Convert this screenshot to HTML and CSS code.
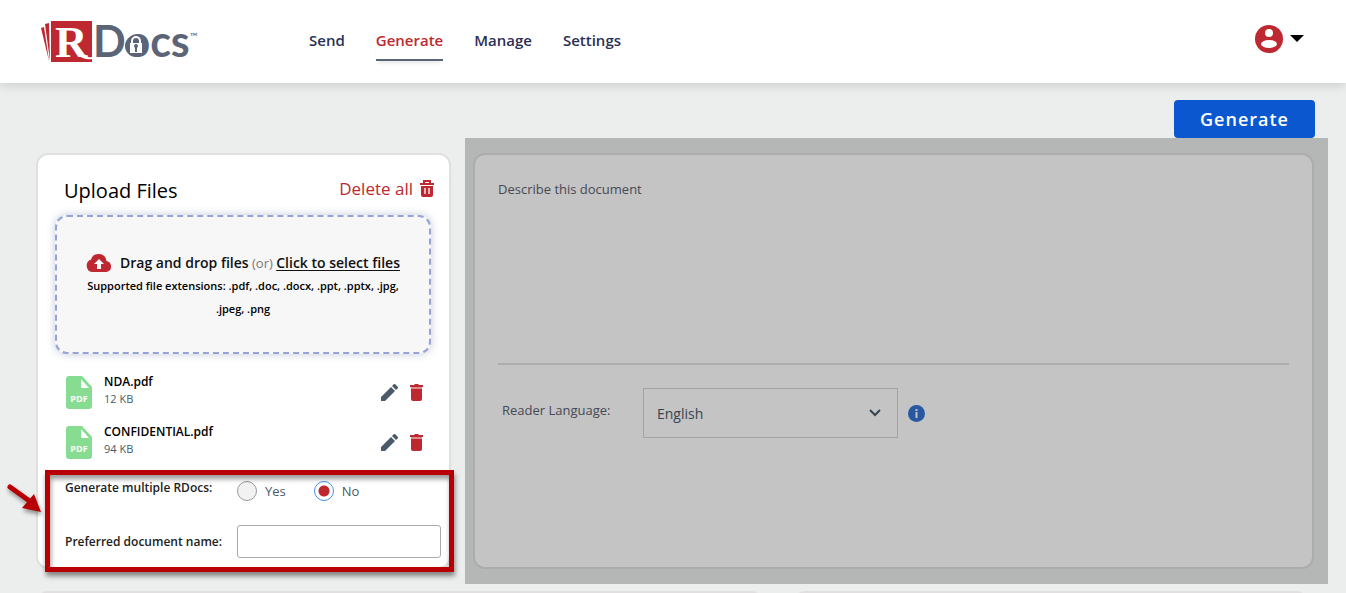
FILE: index.html
```html
<!DOCTYPE html>
<html lang="en">
<head>
    <meta charset="UTF-8">
    <meta name="viewport" content="width=device-width, initial-scale=1.0">
    <title>Generate - RDocs</title>
    <link rel="stylesheet" href="styles.css">
</head>
<body>
    <header>
        <a class="logo" href="#" aria-label="RDocs">
            <svg width="170" height="66" viewBox="0 -12 170 66">
                <path d="M1 7l3-1 5 34z" fill="#be2830"/>
                <path d="M5 3l4-1 1 38z" fill="#be2830"/>
                <path d="M11 0h41v41H11z" fill="#be2830"/>
                <text class="logo-r" x="15" y="36">R</text>
                <path d="M40 34q4 4 12 3" stroke="#fff" stroke-width="2" fill="none"/>
                <text class="logo-docs" x="53" y="36">Docs</text>
                <circle cx="96" cy="25" r="11" fill="#5c6577"/>
                <path d="M92 22v-2a4 4 0 0 1 8 0v2" stroke="#fff" stroke-width="2" fill="none"/>
                <path d="M90 22h12v10H90z" fill="#fff"/>
                <path d="M96 26v5" stroke="#5c6577" stroke-width="2"/>
                <circle cx="96" cy="25" r="2" fill="#5c6577"/>
                <text class="logo-tm" x="150" y="19">™</text>
            </svg>
        </a>
        <nav>
            <a href="#">Send</a>
            <a href="#" class="active">Generate</a>
            <a href="#">Manage</a>
            <a href="#">Settings</a>
        </nav>
        <button class="account" type="button" aria-label="Account">
            <svg width="28" height="28" viewBox="0 0 28 28">
                <circle cx="14" cy="14" r="14" fill="#be2830"/>
                <circle cx="14" cy="8" r="4" fill="#fff"/>
                <ellipse cx="14" cy="19" rx="8" ry="4" fill="#fff"/>
            </svg>
            <svg width="14" height="7" viewBox="0 0 14 7"><path d="M0 0h14L7 7z"/></svg>
        </button>
    </header>

    <main>
        <div class="toolbar">
            <button class="generate" type="button">Generate</button>
        </div>

        <div class="columns">
            <section class="card upload">
                <div class="card-head">
                    <h2>Upload Files</h2>
                    <button class="delete-all" type="button">Delete all
                        <svg width="16" height="18" viewBox="0 0 16 18">
                            <path d="M5 3V1h6v2M1 4h14" stroke="#be2830" stroke-width="2" fill="none"/>
                            <path d="M2 6v9q0 2 2 2h8q2 0 2-2V6z" fill="#be2830"/>
                            <path d="M6 8v6M10 8v6" stroke="#fff" stroke-width="1.3"/>
                        </svg>
                    </button>
                </div>

                <div class="drop-zone">
                    <p class="drop-line">
                        <svg width="26" height="18" viewBox="0 0 26 18">
                            <path d="M6 18a6.500 6.500 0 0 1-1-12.500A8 8 0 0 1 20.500 7 5.600 5.600 0 0 1 20.500 18z" fill="#be2830"/>
                            <path d="M13 5l5 5h-3v5h-4v-5H8z" fill="#fff"/>
                        </svg>
                        <span><b>Drag and drop files</b> (or) <a href="#">Click to select files</a></span>
                    </p>
                    <p class="extensions">Supported file extensions: .pdf, .doc, .docx, .ppt, .pptx, .jpg, .jpeg, .png</p>
                </div>

                <ul class="files">
                    <li>
                        <svg class="pdf" width="26" height="33" viewBox="0 0 26 33">
                            <path d="M3 0h13l10 11v19q0 3-3 3H3q-3 0-3-3V3q0-3 3-3z" fill="#86dc91"/>
                            <path d="M15 3v9h8z" fill="#fff"/>
                            <text x="13" y="26" text-anchor="middle">PDF</text>
                        </svg>
                        <div class="file-name">
                            <b>NDA.pdf</b>
                            <small>12 KB</small>
                        </div>
                        <button type="button" aria-label="Rename NDA.pdf">
                            <svg width="17" height="17" viewBox="0 0 17 17"><path d="M0 17v-4L10 3l4 4L4 17zM11 2l2-2h1l3 3v1l-2 2z" fill="#4a5a68"/></svg>
                        </button>
                        <button type="button" aria-label="Delete NDA.pdf">
                            <svg width="13" height="17" viewBox="0 0 13 17"><path d="M0 1h4l1-1h3l1 1h4v2H0z" fill="#be2830"/><path d="M1 3h11v2H1z" fill="#dc8a8e"/><path d="M1 5h11v10q0 2-2 2H3q-2 0-2-2z" fill="#be2830"/></svg>
                        </button>
                    </li>
                    <li>
                        <svg class="pdf" width="26" height="33" viewBox="0 0 26 33">
                            <path d="M3 0h13l10 11v19q0 3-3 3H3q-3 0-3-3V3q0-3 3-3z" fill="#86dc91"/>
                            <path d="M15 3v9h8z" fill="#fff"/>
                            <text x="13" y="26" text-anchor="middle">PDF</text>
                        </svg>
                        <div class="file-name">
                            <b>CONFIDENTIAL.pdf</b>
                            <small>94 KB</small>
                        </div>
                        <button type="button" aria-label="Rename CONFIDENTIAL.pdf">
                            <svg width="17" height="17" viewBox="0 0 17 17"><path d="M0 17v-4L10 3l4 4L4 17zM11 2l2-2h1l3 3v1l-2 2z" fill="#4a5a68"/></svg>
                        </button>
                        <button type="button" aria-label="Delete CONFIDENTIAL.pdf">
                            <svg width="13" height="17" viewBox="0 0 13 17"><path d="M0 1h4l1-1h3l1 1h4v2H0z" fill="#be2830"/><path d="M1 3h11v2H1z" fill="#dc8a8e"/><path d="M1 5h11v10q0 2-2 2H3q-2 0-2-2z" fill="#be2830"/></svg>
                        </button>
                    </li>
                </ul>

                <form class="options">
                    <div class="option-row" role="radiogroup" aria-labelledby="multipleLabel">
                        <span class="option-label raised" id="multipleLabel">Generate multiple RDocs:</span>
                        <label class="radio"><input type="radio" name="multiple" value="yes"> Yes</label>
                        <label class="radio"><input type="radio" name="multiple" value="no" checked> No</label>
                    </div>
                    <div class="option-row">
                        <label class="option-label" for="docName">Preferred document name:</label>
                        <input type="text" id="docName" name="docName">
                    </div>
                    <div class="highlight"></div>
                    <svg class="arrow" width="40" height="36" viewBox="0 0 40 36">
                        <path d="M5 5l21 15" stroke="#b80004" stroke-width="5" stroke-linecap="round"/>
                        <path d="M29 12l7 18-19-4z" fill="#b80004"/>
                    </svg>
                </form>
            </section>

            <section class="card details">
                <textarea aria-label="Describe this document" placeholder="Describe this document"></textarea>
                <div class="language">
                    <label class="raised" for="language">Reader Language:</label>
                    <div class="select">
                        <select id="language" name="language">
                            <option>English</option>
                        </select>
                        <svg width="12" height="8" viewBox="0 0 12 8"><path d="M1 1l5 5 5-5" stroke="#4a5a68" stroke-width="2" fill="none"/></svg>
                    </div>
                    <svg class="info" width="17" height="17" viewBox="0 0 17 17">
                        <circle cx="8.500" cy="8.500" r="8.500" fill="#3473d2"/>
                        <path d="M8.500 4v2M8.500 7v6" stroke="#fff" stroke-width="2" fill="none"/>
                    </svg>
                </div>
                <div class="shade"></div>
            </section>
        </div>

        <div class="lower">
            <section class="card"></section>
            <section class="card"></section>
        </div>
    </main>
</body>
</html>
```

FILE: styles.css
```css
* {
    box-sizing: border-box;
}
body {
    font-family: "Open Sans", "Noto Sans", sans-serif;
    background-color: #ebeeed;
    color: #4a5a68;
    margin: 0;
    height: 100vh;
    overflow: hidden;
}
button {
    font-family: inherit;
    background: none;
    border: none;
    padding: 0;
    cursor: pointer;
}
svg {
    display: block;
    flex: none;
}
header {
    display: flex;
    align-items: center;
    height: 83px;
    padding: 0 42px 0 40px;
    background-color: #fff;
    box-shadow: 0 2px 10px rgba(0, 0, 0, 0.15);
}
.logo-r {
    font: bold 45px "Liberation Serif", serif;
    fill: #fff;
}
.logo-docs {
    font: bold 43px Lato, sans-serif;
    fill: #5c6577;
}
.logo-tm {
    font: 10px Lato, sans-serif;
    fill: #5c6577;
}
nav {
    display: flex;
    flex: 1;
    gap: 31px;
    margin-left: 99px;
}
nav a {
    color: #2b2f55;
    font-size: 15px;
    font-weight: 600;
    line-height: 20px;
    padding: 7px 0 9px;
    border-bottom: 2px solid transparent;
    text-decoration: none;
}
nav .active {
    color: #be2830;
    border-color: #5c6577;
    box-shadow: 0 4px 4px -2px rgba(0, 0, 0, 0.1);
}
.account {
    display: flex;
    align-items: center;
    gap: 7px;
    margin-bottom: 6px;
}
main {
    padding: 17px 31px 0 36px;
}
.toolbar {
    display: flex;
    justify-content: flex-end;
}
.generate {
    height: 38px;
    padding: 0 26px;
    background-color: #0b57d0;
    border-radius: 4px;
    color: #fff;
    font-size: 18px;
    font-weight: 600;
    letter-spacing: 1px;
}
.columns {
    display: grid;
    grid-template-columns: 415fr 841fr;
    gap: 22px;
    margin: 15px 1px 0 0;
}
.card {
    position: relative;
    background-color: #fff;
    border: 2px solid #e1dfe0;
    border-radius: 12px;
}
.upload {
    padding: 20px 14px 9px 17px;
}
.card-head {
    display: flex;
    justify-content: space-between;
    height: 40px;
    padding-left: 9px;
}
h2 {
    margin: 0;
    color: #000;
    font-size: 20px;
    font-weight: 500;
    line-height: 32px;
}
.delete-all {
    display: flex;
    align-items: center;
    gap: 6px;
    height: 27px;
    color: #be2830;
    font-size: 17px;
    font-weight: 500;
}
.drop-zone {
    height: 139px;
    margin-right: 4px;
    padding: 35px 20px 0;
    background-color: #f7f7f7;
    border: 2px dashed #95a3d9;
    border-radius: 12px;
    box-shadow: 0 0 8px rgba(60, 80, 130, 0.3);
    text-align: center;
}
.drop-zone p {
    margin: 0;
}
.drop-line {
    display: flex;
    align-items: center;
    justify-content: center;
    gap: 8px;
    color: #777;
    font-size: 13px;
    line-height: 22px;
    white-space: nowrap;
}
.drop-line b, .drop-line a {
    color: #111;
    font-size: 14px;
    font-weight: 600;
}
.drop-line a {
    text-underline-offset: 2px;
}
.extensions {
    color: #000;
    font-size: 11px;
    font-weight: 600;
    line-height: 23px;
}
.files {
    display: flex;
    flex-direction: column;
    gap: 17px;
    margin: 22px 12px 0 11px;
    padding: 0;
    list-style: none;
}
.files li {
    display: flex;
    align-items: center;
    gap: 12px;
    height: 33px;
}
.pdf text {
    font: bold 9px "Open Sans", sans-serif;
    fill: #fff;
}
.file-name {
    display: flex;
    flex: 1;
    flex-direction: column;
    margin-top: -6px;
}
.file-name b {
    color: #000;
    font-size: 12px;
    font-weight: 600;
    line-height: 18px;
}
.file-name small {
    font-size: 11px;
    line-height: 15px;
}
.options {
    position: relative;
    display: flex;
    flex-direction: column;
    gap: 18px;
    margin-top: 15px;
    padding-left: 10px;
}
.option-row {
    display: flex;
    align-items: center;
    height: 33px;
}
.option-label {
    width: 172px;
    color: #222;
    font-size: 12px;
    font-weight: 600;
}
.raised {
    padding-bottom: 6px;
}
.radio {
    display: flex;
    align-items: center;
    gap: 8px;
    margin-right: 28px;
    font-size: 13px;
}
.radio input {
    appearance: none;
    width: 20px;
    height: 20px;
    margin: 0;
    background-color: #f2f2f2;
    border: 1px solid #999;
    border-radius: 50%;
}
.radio input:checked {
    background: radial-gradient(circle, #be2830 5px, #fff 6px);
    border-color: #4a90e2;
}
.option-row input[type="text"] {
    flex: 1;
    min-width: 0;
    height: 33px;
    margin-right: -6px;
    background-color: #fff;
    border: 1px solid #aaa;
    border-radius: 3px;
}
.highlight {
    position: absolute;
    inset: -4px -19px -14px -10px;
    border: 5px solid #b80004;
    box-shadow: 1px 4px 5px rgba(0, 0, 0, 0.45), inset 1px 4px 5px rgba(0, 0, 0, 0.4);
    pointer-events: none;
}
.arrow {
    position: absolute;
    top: 8px;
    left: -50px;
    filter: drop-shadow(1px 3px 2px rgba(0, 0, 0, 0.4));
}
.details {
    padding: 23px 23px 0;
}
.details textarea {
    display: block;
    width: 100%;
    height: 187px;
    padding: 1px 0;
    background: none;
    border: none;
    border-bottom: 2px solid #e1e1e1;
    color: #4a5a68;
    font: 13px/20px "Open Sans", sans-serif;
    resize: none;
}
.details textarea::placeholder {
    color: #5c6170;
}
.language {
    display: flex;
    align-items: center;
    margin: 23px 0 0 4px;
    font-size: 13px;
}
.language label {
    width: 141px;
    color: #5c6170;
}
.select {
    position: relative;
    width: 255px;
}
.select select {
    appearance: none;
    width: 100%;
    height: 50px;
    padding: 0 13px;
    background: none;
    border: 1px solid #d5d5d5;
    color: #4a5a68;
    font: 14px "Open Sans", sans-serif;
}
.select svg {
    position: absolute;
    top: 21px;
    right: 17px;
    pointer-events: none;
}
.info {
    margin-left: 10px;
}
.shade {
    position: absolute;
    inset: -17px -16px -17px -10px;
    background-color: rgba(0, 0, 0, 0.23);
}
.lower {
    display: grid;
    grid-template-columns: 727fr 515fr;
    gap: 30px;
    margin: 22px 7px 0 0;
}
.lower .card {
    height: 120px;
}
```
